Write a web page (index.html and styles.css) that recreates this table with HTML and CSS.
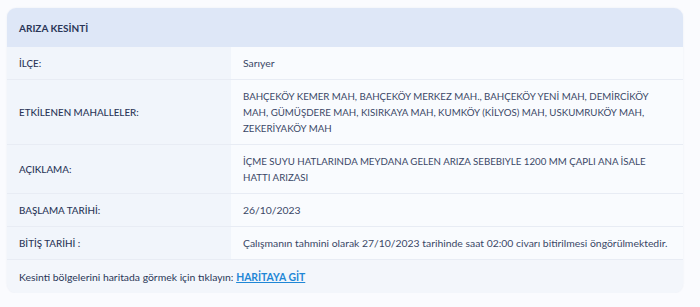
FILE: index.html
```html
<!DOCTYPE html>
<html lang="tr">
<head>
<meta charset="utf-8">
<link rel="stylesheet" href="styles.css">
</head>
<body>
<div class="card">
  <div class="card-head">ARIZA KESİNTİ</div>
  <div class="rows">
    <div class="row"><div class="label">İLÇE:</div><div class="value">Sarıyer</div></div>
    <div class="row"><div class="label">ETKİLENEN MAHALLELER:</div><div class="value caps">BAHÇEKÖY KEMER MAH, BAHÇEKÖY MERKEZ MAH., BAHÇEKÖY YENİ MAH, DEMİRCİKÖY MAH, GÜMÜŞDERE MAH, KISIRKAYA MAH, KUMKÖY (KİLYOS) MAH, USKUMRUKÖY MAH, ZEKERİYAKÖY MAH</div></div>
    <div class="row"><div class="label">AÇIKLAMA:</div><div class="value caps">İÇME SUYU HATLARINDA MEYDANA GELEN ARIZA SEBEBIYLE 1200 MM ÇAPLI ANA İSALE HATTI ARIZASI</div></div>
    <div class="row"><div class="label">BAŞLAMA TARİHİ:</div><div class="value">26/10/2023</div></div>
    <div class="row"><div class="label">BİTİŞ TARİHİ :</div><div class="value">Çalışmanın tahmini olarak 27/10/2023 tarihinde saat 02:00 civarı bitirilmesi öngörülmektedir.</div></div>
  </div>
  <div class="card-foot">Kesinti bölgelerini haritada görmek için tıklayın: <a href="#" class="map-link">HARİTAYA GİT</a></div>
</div>
</body>
</html>
```
FILE: styles.css
```css
html, body {
  margin: 0;
  padding: 0;
  background: #fafbfe;
}
body {
  padding: 8px 17px 0 7px;
  font-family: "Lato", "DejaVu Sans", sans-serif;
  font-size: 10.4px;
  color: #2f3d5c;
}
.card {
  background: #f3f6fb;
  border-radius: 9px;
  overflow: hidden;
  box-shadow: 0 0 2px rgba(40, 60, 110, 0.08);
}
.card-head {
  background: #dee7f7;
  padding: 12px 12px 11px;
  line-height: 16px;
  font-size: 10px;
  font-weight: 700;
  color: #2a3658;
}
.row {
  display: grid;
  grid-template-columns: 224px 1fr;
  border-bottom: 1px solid #e8ecf4;
}
.label {
  background: #f1f5fb;
  padding: 8px 12px;
  line-height: 16px;
  display: flex;
  align-items: center;
  font-size: 9.8px;
  font-weight: 500;
  color: #2a3658;
}
.value {
  background: #f9fbfe;
  padding: 8px 12px;
  line-height: 16px;
  color: #3a4766;
}
.value.caps {
  font-size: 9.7px;
}
.card-foot {
  padding: 9px 12px 8px;
  line-height: 16px;
  color: #2a3658;
}
.map-link {
  color: #1f87d6;
  font-weight: 700;
}
```
